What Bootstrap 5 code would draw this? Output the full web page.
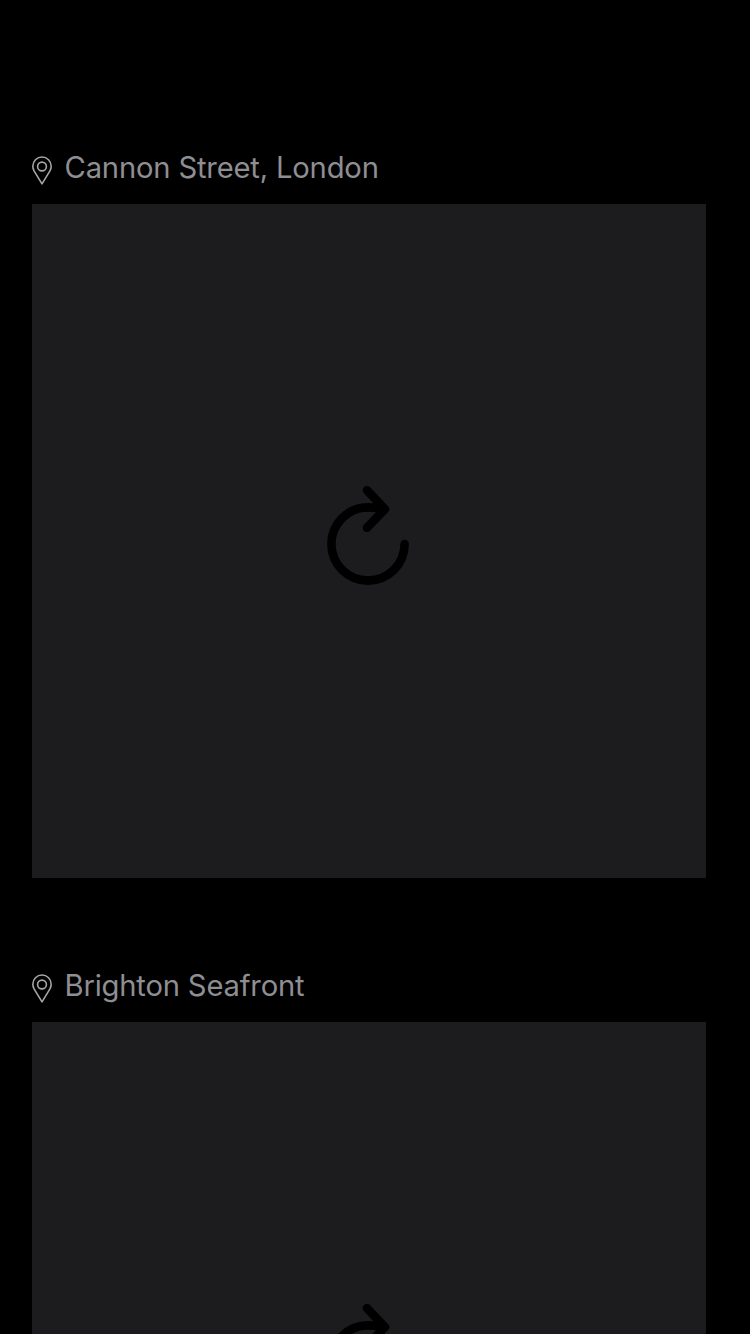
<!DOCTYPE html>
<html lang="en">
<head>
<meta charset="utf-8">
<meta name="viewport" content="width=device-width, initial-scale=1">
<title>Places</title>
<link href="https://cdn.jsdelivr.net/npm/bootstrap@5.3.0/dist/css/bootstrap.min.css" rel="stylesheet">
<style>
  body { background: #000; font-family: Inter, "Liberation Sans", sans-serif; }
  .feed { height: 1334px; padding: 148px 44px 0 32px; gap: 88px; }
  .place-name { height: 40px; margin-bottom: 16px; gap: 11.5px; color: #8e8e93; font-size: 29.2px; line-height: 40px; letter-spacing: -.18px; }
  .pin { width: 21px; height: 30px; margin-top: 7px; }
  .photo { height: 674px; background: #1c1c1e; }
</style>
</head>
<body>
<svg class="d-none" xmlns="http://www.w3.org/2000/svg">
  <symbol id="pin" viewBox="0 0 21 30">
    <g fill="none" stroke="#a6a6a6" stroke-width="1.6" stroke-linejoin="round">
      <path d="M10 28.9 2.2 16.1C1.2 14.3 .8 12.8 .8 11.2a9.2 9.2 0 0 1 18.4 0C19.2 12.8 18.8 14.3 17.8 16.1Z"/>
      <circle cx="10" cy="11.5" r="4.4"/>
    </g>
  </symbol>
  <symbol id="reload" viewBox="0 0 84 110">
    <path d="M77.6 58A36.6 36.6 0 1 1 41 21.4Q50 21.4 58 23.1M40 4.2 58 23.1 40 41.8" fill="none" stroke="#000" stroke-width="8.6" stroke-linecap="round" stroke-linejoin="round"/>
  </symbol>
</svg>
<main class="feed d-flex flex-column overflow-hidden">
  <section>
    <div class="place-name d-flex align-items-start">
      <svg class="pin flex-shrink-0"><use href="#pin"/></svg>
      <span>Cannon Street, London</span>
    </div>
    <div class="photo d-flex align-items-center justify-content-center">
      <svg width="84" height="110"><use href="#reload"/></svg>
    </div>
  </section>
  <section>
    <div class="place-name d-flex align-items-start">
      <svg class="pin flex-shrink-0"><use href="#pin"/></svg>
      <span>Brighton Seafront</span>
    </div>
    <div class="photo d-flex align-items-center justify-content-center">
      <svg width="84" height="110"><use href="#reload"/></svg>
    </div>
  </section>
</main>
<script src="https://cdn.jsdelivr.net/npm/bootstrap@5.3.0/dist/js/bootstrap.bundle.min.js"></script>
</body>
</html>
